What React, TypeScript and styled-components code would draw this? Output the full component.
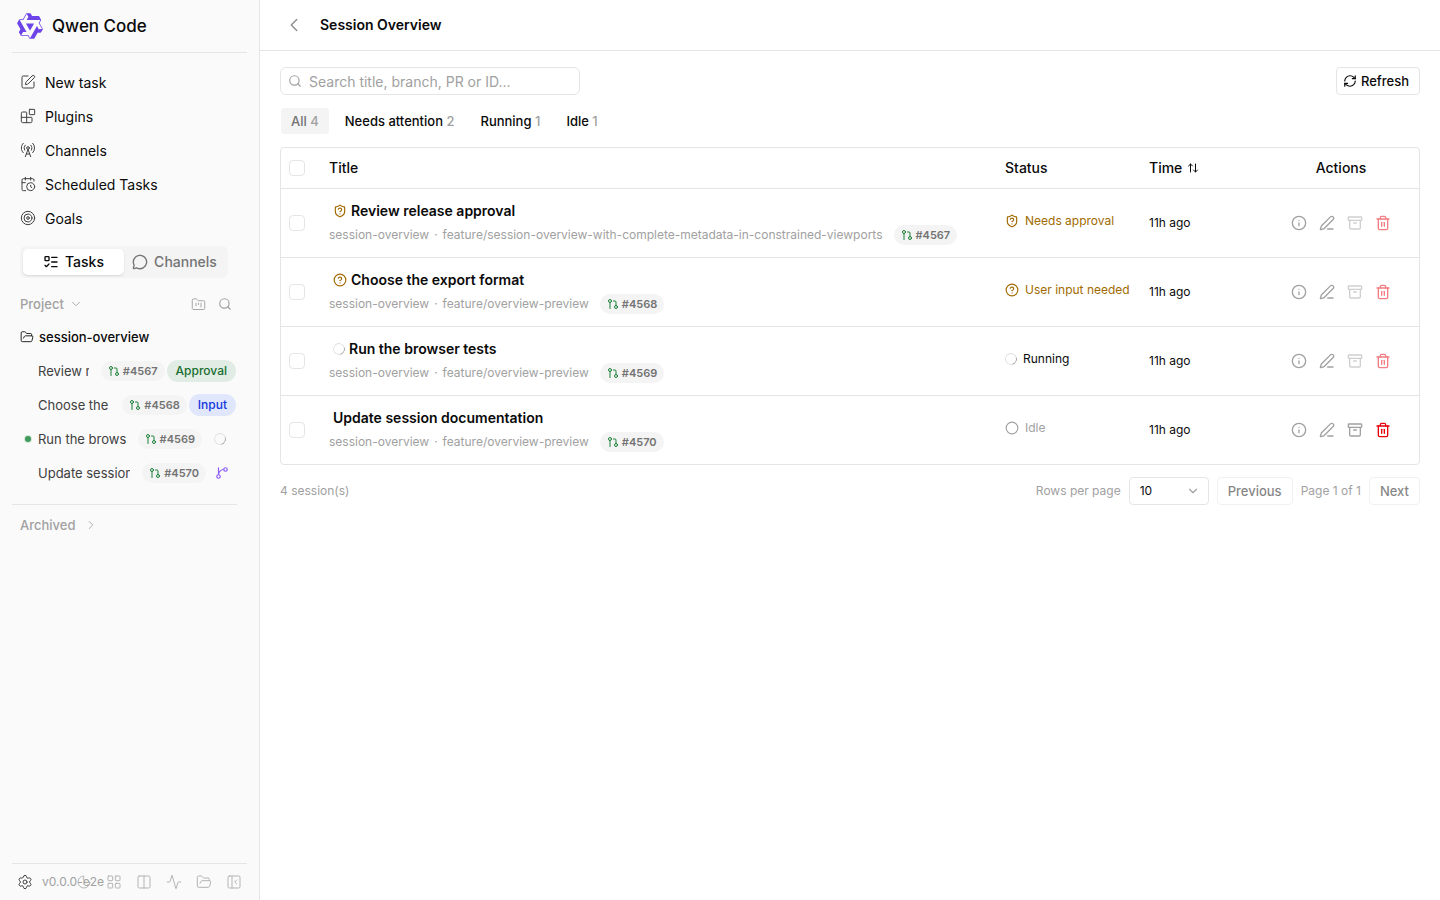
import React from "react";
import styled, { createGlobalStyle, css } from "styled-components";
import {
  Activity,
  Archive,
  ArrowUpDown,
  Blocks,
  CalendarClock,
  ChevronDown,
  ChevronLeft,
  ChevronRight,
  Circle,
  CircleQuestionMark,
  Columns2,
  FolderKanban,
  FolderOpen,
  GitPullRequest,
  Info,
  LayoutGrid,
  ListTodo,
  MessageCircle,
  Moon,
  PanelLeftClose,
  PenLine,
  RadioTower,
  RefreshCw,
  Search,
  Settings,
  ShieldQuestionMark,
  SquarePen,
  Target,
  Trash2,
} from "lucide-react";

const color = {
  text: "#0a0a0a",
  muted: "#a1a1a1",
  soft: "#737373",
  line: "#e5e5e5",
  panel: "#fafafa",
  amber: "#a16a00",
  green: "#1a7f37",
  red: "#e7000b",
};

const GlobalStyle = createGlobalStyle`
  *, *::before, *::after { box-sizing: border-box; }
  body {
    margin: 0;
    background: #fff;
    color: ${color.text};
    font-family: Inter, "Liberation Sans", sans-serif;
    font-size: 14px;
    line-height: 20px;
  }
  button, input, select { font: inherit; color: inherit; }
  button { margin: 0; padding: 0; border: 0; background: none; cursor: pointer; }
  a { color: inherit; text-decoration: none; }
  svg { flex: none; display: block; }
`;

const Shell = styled.div`
  display: flex;
  min-height: 100vh;
`;

/* Sidebar */

const Sidebar = styled.aside`
  display: flex;
  flex-direction: column;
  flex: none;
  width: 260px;
  padding: 0 12px;
  background: ${color.panel};
  border-right: 1px solid ${color.line};
`;

const Brand = styled.div`
  display: flex;
  align-items: center;
  gap: 8px;
  height: 53px;
  padding: 0 4px;
  border-bottom: 1px solid ${color.line};
  font-size: 17px;
  font-weight: 500;
`;

const Nav = styled.nav`
  display: flex;
  flex-direction: column;
  padding: 13px 8px 10px;
`;

const NavLink = styled.a`
  display: flex;
  align-items: center;
  gap: 9px;
  height: 34px;
  svg {
    color: #404040;
    margin-bottom: 2px;
  }
`;

const Segment = styled.div`
  display: flex;
  width: 208px;
  height: 32px;
  margin: 0 8px;
  padding: 3px;
  border-radius: 6px;
  background: #f4f4f5;
`;

const SegmentButton = styled.button<{ $active?: boolean }>`
  display: flex;
  flex: 1;
  align-items: center;
  justify-content: center;
  gap: 6px;
  border-radius: 5px;
  font-weight: 500;
  color: ${(p) => (p.$active ? color.text : color.soft)};
  ${(p) =>
    p.$active &&
    css`
      background: #fff;
      box-shadow: 0 1px 2px rgba(0, 0, 0, 0.12);
    `}
`;

const SectionHead = styled.div`
  display: flex;
  align-items: center;
  gap: 12px;
  height: 32px;
  margin-top: 10px;
  padding: 0 15px 0 8px;
  color: ${color.muted};
`;

const SectionButton = styled.button<{ $gap?: number }>`
  display: flex;
  align-items: center;
  gap: ${(p) => p.$gap ?? 5}px;
  margin-right: auto;
  font-size: 13px;
  font-weight: 500;
  color: ${color.muted};
`;

const ProjectRow = styled.button`
  display: flex;
  align-items: center;
  gap: 5px;
  height: 34px;
  padding: 0 8px;
  font-size: 13px;
  font-weight: 500;
`;

const SessionList = styled.ul`
  margin: 0 10px 0 0;
  padding: 0 0 14px;
  list-style: none;
  border-bottom: 1px solid ${color.line};
`;

const SessionItem = styled.li`
  display: flex;
  align-items: center;
  gap: 2px;
  height: 34px;
  padding-right: 1px;
`;

const Marker = styled.span<{ $on?: boolean }>`
  flex: none;
  width: 6px;
  height: 6px;
  margin: 0 6px 0 13px;
  border-radius: 50%;
  ${(p) =>
    p.$on &&
    css`
      background: #3f9a5c;
      box-shadow: 0 0 0 1px #d5e8db;
    `}
`;

const SessionName = styled.a`
  flex: 1;
  min-width: 0;
  margin: 0 10px 0 -1px;
  overflow: hidden;
  white-space: nowrap;
  font-size: 13px;
  color: #404040;
`;

const Chip = styled.a`
  display: inline-flex;
  flex: none;
  align-items: center;
  gap: 3px;
  height: 20px;
  padding: 0 7px;
  border-radius: 10px;
  background: #f4f4f4;
  font-size: 11px;
  font-weight: 600;
  color: ${color.soft};
  svg {
    color: ${color.green};
  }
`;

const Tag = styled.span<{ $tone: "green" | "blue" }>`
  flex: none;
  padding: 1px 9px;
  border-radius: 11px;
  font-size: 12px;
  font-weight: 500;
  ${(p) =>
    p.$tone === "green"
      ? css`
          background: #e1ece4;
          color: #166d2f;
        `
      : css`
          background: #e0e6fb;
          color: #1237e0;
        `}
`;

const StatusSlot = styled.span<{ $wide?: boolean }>`
  display: flex;
  flex: none;
  justify-content: center;
  width: ${(p) => (p.$wide ? 32 : 28)}px;
`;

const Spinner = styled.span`
  flex: none;
  width: 12px;
  height: 12px;
  border: 1px solid #e2e2e2;
  border-right-color: #a8a8a8;
  border-radius: 50%;
  transform: rotate(30deg);
`;

const ArchivedRow = styled.div`
  display: flex;
  align-items: center;
  height: 40px;
  padding: 0 8px;
  color: ${color.muted};
`;

const SidebarFooter = styled.footer`
  display: flex;
  align-items: center;
  height: 37px;
  margin-top: auto;
  padding-left: 5px;
  border-top: 1px solid ${color.line};
  color: ${color.muted};
`;

const FooterButton = styled.button<{ $dark?: boolean }>`
  display: flex;
  align-items: center;
  color: ${(p) => (p.$dark ? "#404040" : "#b4b4b4")};
`;

const HeadIconButton = styled(FooterButton)`
  color: ${color.muted};
`;

const Version = styled.span`
  width: 36px;
  margin-left: 9px;
  font-size: 12px;
  white-space: nowrap;
`;

const FooterTools = styled.div`
  display: flex;
  gap: 14px;
  margin-left: -2px;
`;

/* Main area */

const Main = styled.main`
  flex: 1;
  min-width: 0;
`;

const TopBar = styled.header`
  display: flex;
  align-items: center;
  gap: 16px;
  height: 51px;
  padding: 0 24px;
  border-bottom: 1px solid ${color.line};
`;

const BackButton = styled.button`
  display: flex;
  justify-content: center;
  width: 20px;
  color: #8c8c8c;
`;

const PageTitle = styled.h1`
  margin: 0;
  font-size: 14px;
  font-weight: 600;
  line-height: 20px;
`;

const Content = styled.div`
  display: flex;
  flex-direction: column;
  padding: 16px 20px;
`;

const Toolbar = styled.div`
  display: flex;
  align-items: center;
  justify-content: space-between;
`;

const SearchField = styled.label`
  display: flex;
  align-items: center;
  gap: 7px;
  width: 300px;
  height: 28px;
  padding: 0 7px;
  border: 1px solid ${color.line};
  border-radius: 6px;
  color: ${color.muted};
  input {
    flex: 1;
    min-width: 0;
    height: 20px;
    margin-top: 2px;
    padding: 0;
    border: 0;
    outline: 0;
    background: none;
    color: ${color.text};
  }
  input::placeholder {
    color: ${color.muted};
    opacity: 1;
  }
`;

const OutlineButton = styled.button`
  display: flex;
  align-items: center;
  gap: 4px;
  height: 28px;
  padding: 0 10px;
  border: 1px solid ${color.line};
  border-radius: 4px;
  font-size: 13px;
  font-weight: 500;
  &:disabled {
    opacity: 0.5;
  }
`;

const RefreshButton = styled(OutlineButton)`
  padding: 0 10px 0 6px;
`;

const Filters = styled.div`
  display: flex;
  gap: 6px;
  margin: 13px 1px;
`;

const FilterButton = styled.button<{ $active?: boolean }>`
  height: 26px;
  padding: 0 10px;
  border-radius: 3px;
  font-size: 13px;
  font-weight: 500;
  background: ${(p) => (p.$active ? "#f4f4f5" : "transparent")};
  color: ${(p) => (p.$active ? color.soft : color.text)};
  span {
    color: ${color.muted};
  }
`;

const TableFrame = styled.div`
  border: 1px solid ${color.line};
  border-radius: 4px;
  overflow: hidden;
`;

const Table = styled.table`
  width: 100%;
  border-collapse: separate;
  border-spacing: 0;
  table-layout: fixed;
`;

const HeadCell = styled.th<{ $width?: number; $center?: boolean }>`
  width: ${(p) => (p.$width ? `${p.$width}px` : "auto")};
  height: 40px;
  padding: 0 8px;
  font-weight: 500;
  text-align: ${(p) => (p.$center ? "center" : "left")};
`;

const SortButton = styled.button`
  display: flex;
  align-items: center;
  gap: 5px;
  font-weight: 500;
`;

const Cell = styled.td`
  height: 69px;
  padding: 0 8px;
  border-top: 1px solid ${color.line};
  font-size: 12px;
`;

const Checkbox = styled.input.attrs({ type: "checkbox" })`
  display: block;
  width: 16px;
  height: 16px;
  margin: 0;
  appearance: none;
  border: 1px solid ${color.line};
  border-radius: 4px;
  background: #fff;
`;

const RowTitle = styled.a`
  display: flex;
  align-items: center;
  gap: 4px;
  height: 20px;
  padding: 0 4px;
  font-size: 14px;
  font-weight: 600;
`;

const RowMeta = styled.div`
  display: flex;
  align-items: center;
  gap: 5px;
  margin-top: 4px;
  color: ${color.muted};
  white-space: nowrap;
  ${Chip} {
    margin-left: 6px;
  }
`;

type Tone = "amber" | "dark" | "muted";
const toneColor: Record<Tone, string> = {
  amber: color.amber,
  dark: color.text,
  muted: color.muted,
};

const Status = styled.span<{ $tone?: Tone }>`
  display: flex;
  align-items: center;
  gap: 6px;
  padding-bottom: 4px;
  white-space: nowrap;
  color: ${(p) => toneColor[p.$tone ?? "dark"]};
`;

const Tint = styled.span`
  display: flex;
  color: ${color.amber};
`;

const Actions = styled.div`
  display: flex;
  justify-content: center;
`;

const ActionButton = styled.button<{ $danger?: boolean }>`
  display: flex;
  align-items: center;
  justify-content: center;
  width: 28px;
  height: 28px;
  color: ${(p) => (p.$danger ? color.red : color.muted)};
  &:disabled {
    opacity: 0.5;
  }
`;

const Pager = styled.div`
  display: flex;
  align-items: center;
  gap: 8px;
  margin-top: 12px;
  font-size: 12px;
  color: ${color.muted};
`;

const Total = styled.span`
  margin-right: auto;
`;

const SelectBox = styled.span`
  display: grid;
  align-items: center;
  width: 80px;
  height: 28px;
  border: 1px solid ${color.line};
  border-radius: 4px;
  select,
  svg {
    grid-area: 1 / 1;
  }
  select {
    width: 100%;
    height: 100%;
    padding: 0 10px;
    appearance: none;
    border: 0;
    background: none;
    color: ${color.text};
  }
  svg {
    justify-self: end;
    margin-right: 8px;
    pointer-events: none;
  }
`;

const PagerButton = styled(OutlineButton)`
  color: ${color.text};
`;

function Logo() {
  return (
    <svg width="28" height="28" viewBox="0 0 24 24" fill="#6d44e8" fillRule="evenodd" aria-hidden="true">
      <path d="M12.604 1.34c.393.69.784 1.382 1.174 2.075a.18.18 0 00.157.091h5.552c.174 0 .322.11.446.327l1.454 2.57c.19.337.24.478.024.837-.26.43-.513.864-.76 1.3l-.367.658c-.106.196-.223.28-.04.512l2.652 4.637c.172.301.111.494-.043.77-.437.785-.882 1.564-1.335 2.34-.159.272-.352.375-.68.37-.777-.016-1.552-.01-2.327.016a.099.099 0 00-.081.05 575.097 575.097 0 01-2.705 4.74c-.169.293-.38.363-.725.364-.997.003-2.002.004-3.017.002a.537.537 0 01-.465-.271l-1.335-2.323a.09.09 0 00-.083-.049H4.982c-.285.03-.553-.001-.805-.092l-1.603-2.77a.543.543 0 01-.002-.54l1.207-2.12a.198.198 0 000-.197 550.951 550.951 0 01-1.875-3.272l-.79-1.395c-.16-.31-.173-.496.095-.965.465-.813.927-1.625 1.387-2.436.132-.234.304-.334.584-.335a338.3 338.3 0 012.589-.001.124.124 0 00.107-.063l2.806-4.895a.488.488 0 01.422-.246c.524-.001 1.053 0 1.583-.006L11.704 1c.341-.003.724.032.9.34zm-3.432.403a.06.06 0 00-.052.03L6.254 6.788a.157.157 0 01-.135.078H3.253c-.056 0-.07.025-.041.074l5.81 10.156c.025.042.013.062-.034.063l-2.795.015a.218.218 0 00-.2.116l-1.32 2.31c-.044.078-.021.118.068.118l5.716.008c.046 0 .08.02.104.061l1.403 2.454c.046.081.092.082.139 0l5.006-8.76.783-1.382a.055.055 0 01.096 0l1.424 2.53a.122.122 0 00.107.062l2.763-.02a.04.04 0 00.035-.02.041.041 0 000-.04l-2.9-5.086a.108.108 0 010-.113l.293-.507 1.12-1.977c.024-.041.012-.062-.035-.062H9.2c-.059 0-.073-.026-.043-.077l1.434-2.505a.107.107 0 000-.114L9.225 1.774a.06.06 0 00-.053-.031zm6.29 8.02c.046 0 .058.02.034.06l-.832 1.465-2.613 4.585a.056.056 0 01-.05.029.058.058 0 01-.05-.029L8.498 9.841c-.02-.034-.01-.052.028-.054l.216-.012 6.722-.012z" />
    </svg>
  );
}

function BranchIcon() {
  return (
    <svg width="14" height="14" viewBox="0 0 24 24" fill="none" stroke="#8b5cf6" strokeWidth="2" strokeLinecap="round" aria-hidden="true">
      <path d="M15 6a9 9 0 0 0-9 9V3" />
      <circle cx="18" cy="6" r="3" />
      <circle cx="6" cy="18" r="3" />
    </svg>
  );
}

function PullRequest({ id }: { id: number }) {
  return (
    <Chip href="#">
      <GitPullRequest size={12} />#{id}
    </Chip>
  );
}

type Kind = "approval" | "input" | "running" | "idle";

interface Session {
  id: number;
  title: string;
  branch: string;
  kind: Kind;
}

const sessions: Session[] = [
  {
    id: 4567,
    title: "Review release approval",
    branch: "feature/session-overview-with-complete-metadata-in-constrained-viewports",
    kind: "approval",
  },
  { id: 4568, title: "Choose the export format", branch: "feature/overview-preview", kind: "input" },
  { id: 4569, title: "Run the browser tests", branch: "feature/overview-preview", kind: "running" },
  { id: 4570, title: "Update session documentation", branch: "feature/overview-preview", kind: "idle" },
];

const nav = [
  { label: "New task", Icon: SquarePen },
  { label: "Plugins", Icon: Blocks },
  { label: "Channels", Icon: RadioTower },
  { label: "Scheduled Tasks", Icon: CalendarClock },
  { label: "Goals", Icon: Target },
];

const tools = [
  { label: "Theme", Icon: Moon },
  { label: "Overview", Icon: LayoutGrid },
  { label: "Split view", Icon: Columns2 },
  { label: "Activity", Icon: Activity },
  { label: "Files", Icon: FolderOpen },
  { label: "Collapse sidebar", Icon: PanelLeftClose },
];

const filters = [
  { label: "All", count: 4 },
  { label: "Needs attention", count: 2 },
  { label: "Running", count: 1 },
  { label: "Idle", count: 1 },
];

const statusView: Record<Kind, { label: string; tone: Tone; icon: React.ReactNode }> = {
  approval: { label: "Needs approval", tone: "amber", icon: <ShieldQuestionMark size={14} /> },
  input: { label: "User input needed", tone: "amber", icon: <CircleQuestionMark size={14} /> },
  running: { label: "Running", tone: "dark", icon: <Spinner /> },
  idle: { label: "Idle", tone: "muted", icon: <Circle size={14} /> },
};

function SidebarStatus({ kind }: { kind: Kind }) {
  if (kind === "approval") return <Tag $tone="green">Approval</Tag>;
  if (kind === "input") return <Tag $tone="blue">Input</Tag>;
  if (kind === "running")
    return (
      <StatusSlot $wide>
        <Spinner />
      </StatusSlot>
    );
  return (
    <StatusSlot>
      <BranchIcon />
    </StatusSlot>
  );
}

function SessionRow({ session }: { session: Session }) {
  const status = statusView[session.kind];
  const busy = session.kind !== "idle";
  return (
    <tr>
      <Cell>
        <Checkbox aria-label={`Select ${session.title}`} />
      </Cell>
      <Cell>
        <RowTitle href="#">
          {busy && (session.kind === "running" ? status.icon : <Tint>{status.icon}</Tint>)}
          {session.title}
        </RowTitle>
        <RowMeta>
          <span>session-overview</span>
          <span>·</span>
          <span>{session.branch}</span>
          <PullRequest id={session.id} />
        </RowMeta>
      </Cell>
      <Cell>
        <Status $tone={status.tone}>
          {status.icon}
          {status.label}
        </Status>
      </Cell>
      <Cell>11h ago</Cell>
      <Cell>
        <Actions>
          <ActionButton aria-label="Details">
            <Info size={16} />
          </ActionButton>
          <ActionButton aria-label="Rename">
            <PenLine size={16} />
          </ActionButton>
          <ActionButton aria-label="Archive" disabled={busy}>
            <Archive size={16} />
          </ActionButton>
          <ActionButton aria-label="Delete" $danger disabled={busy}>
            <Trash2 size={16} />
          </ActionButton>
        </Actions>
      </Cell>
    </tr>
  );
}

export default function App() {
  return (
    <Shell>
      <GlobalStyle />
      <Sidebar>
        <Brand>
          <Logo />
          Qwen Code
        </Brand>
        <Nav>
          {nav.map(({ label, Icon }) => (
            <NavLink href="#" key={label}>
              <Icon size={16} strokeWidth={1.5} />
              {label}
            </NavLink>
          ))}
        </Nav>
        <Segment>
          <SegmentButton $active>
            <ListTodo size={16} />
            Tasks
          </SegmentButton>
          <SegmentButton>
            <MessageCircle size={16} />
            Channels
          </SegmentButton>
        </Segment>
        <SectionHead>
          <SectionButton>
            Project
            <ChevronDown size={14} strokeWidth={1.5} />
          </SectionButton>
          <HeadIconButton aria-label="Add project">
            <FolderKanban size={15} strokeWidth={1.5} />
          </HeadIconButton>
          <HeadIconButton aria-label="Search tasks">
            <Search size={14} />
          </HeadIconButton>
        </SectionHead>
        <ProjectRow>
          <FolderOpen size={14} strokeWidth={1.5} />
          session-overview
        </ProjectRow>
        <SessionList>
          {sessions.map((s) => (
            <SessionItem key={s.id}>
              <Marker $on={s.kind === "running"} />
              <SessionName href="#">{s.title}</SessionName>
              <PullRequest id={s.id} />
              <SidebarStatus kind={s.kind} />
            </SessionItem>
          ))}
        </SessionList>
        <ArchivedRow>
          <SectionButton $gap={8}>
            Archived
            <ChevronRight size={14} strokeWidth={1.5} />
          </SectionButton>
        </ArchivedRow>
        <SidebarFooter>
          <FooterButton $dark aria-label="Settings">
            <Settings size={16} strokeWidth={1.5} />
          </FooterButton>
          <Version>v0.0.0-e2e</Version>
          <FooterTools>
            {tools.map(({ label, Icon }) => (
              <FooterButton key={label} aria-label={label}>
                <Icon size={16} strokeWidth={1.5} />
              </FooterButton>
            ))}
          </FooterTools>
        </SidebarFooter>
      </Sidebar>
      <Main>
        <TopBar>
          <BackButton aria-label="Back">
            <ChevronLeft size={22} strokeWidth={1.5} />
          </BackButton>
          <PageTitle>Session Overview</PageTitle>
        </TopBar>
        <Content>
          <Toolbar>
            <SearchField>
              <Search size={14} />
              <input type="text" aria-label="Search sessions" placeholder="Search title, branch, PR or ID..." />
            </SearchField>
            <RefreshButton>
              <RefreshCw size={14} />
              Refresh
            </RefreshButton>
          </Toolbar>
          <Filters>
            {filters.map(({ label, count }, i) => (
              <FilterButton key={label} $active={i === 0}>
                {label} <span>{count}</span>
              </FilterButton>
            ))}
          </Filters>
          <TableFrame>
            <Table>
              <thead>
                <tr>
                  <HeadCell $width={40}>
                    <Checkbox aria-label="Select all sessions" />
                  </HeadCell>
                  <HeadCell>Title</HeadCell>
                  <HeadCell $width={144}>Status</HeadCell>
                  <HeadCell $width={122}>
                    <SortButton>
                      Time
                      <ArrowUpDown size={12} />
                    </SortButton>
                  </HeadCell>
                  <HeadCell $width={156} $center>
                    Actions
                  </HeadCell>
                </tr>
              </thead>
              <tbody>
                {sessions.map((s) => (
                  <SessionRow key={s.id} session={s} />
                ))}
              </tbody>
            </Table>
          </TableFrame>
          <Pager>
            <Total>4 session(s)</Total>
            <label htmlFor="page-size">Rows per page</label>
            <SelectBox>
              <select id="page-size" defaultValue="10">
                <option>10</option>
                <option>20</option>
                <option>50</option>
              </select>
              <ChevronDown size={14} />
            </SelectBox>
            <PagerButton disabled>Previous</PagerButton>
            <span>Page 1 of 1</span>
            <PagerButton disabled>Next</PagerButton>
          </Pager>
        </Content>
      </Main>
    </Shell>
  );
}
